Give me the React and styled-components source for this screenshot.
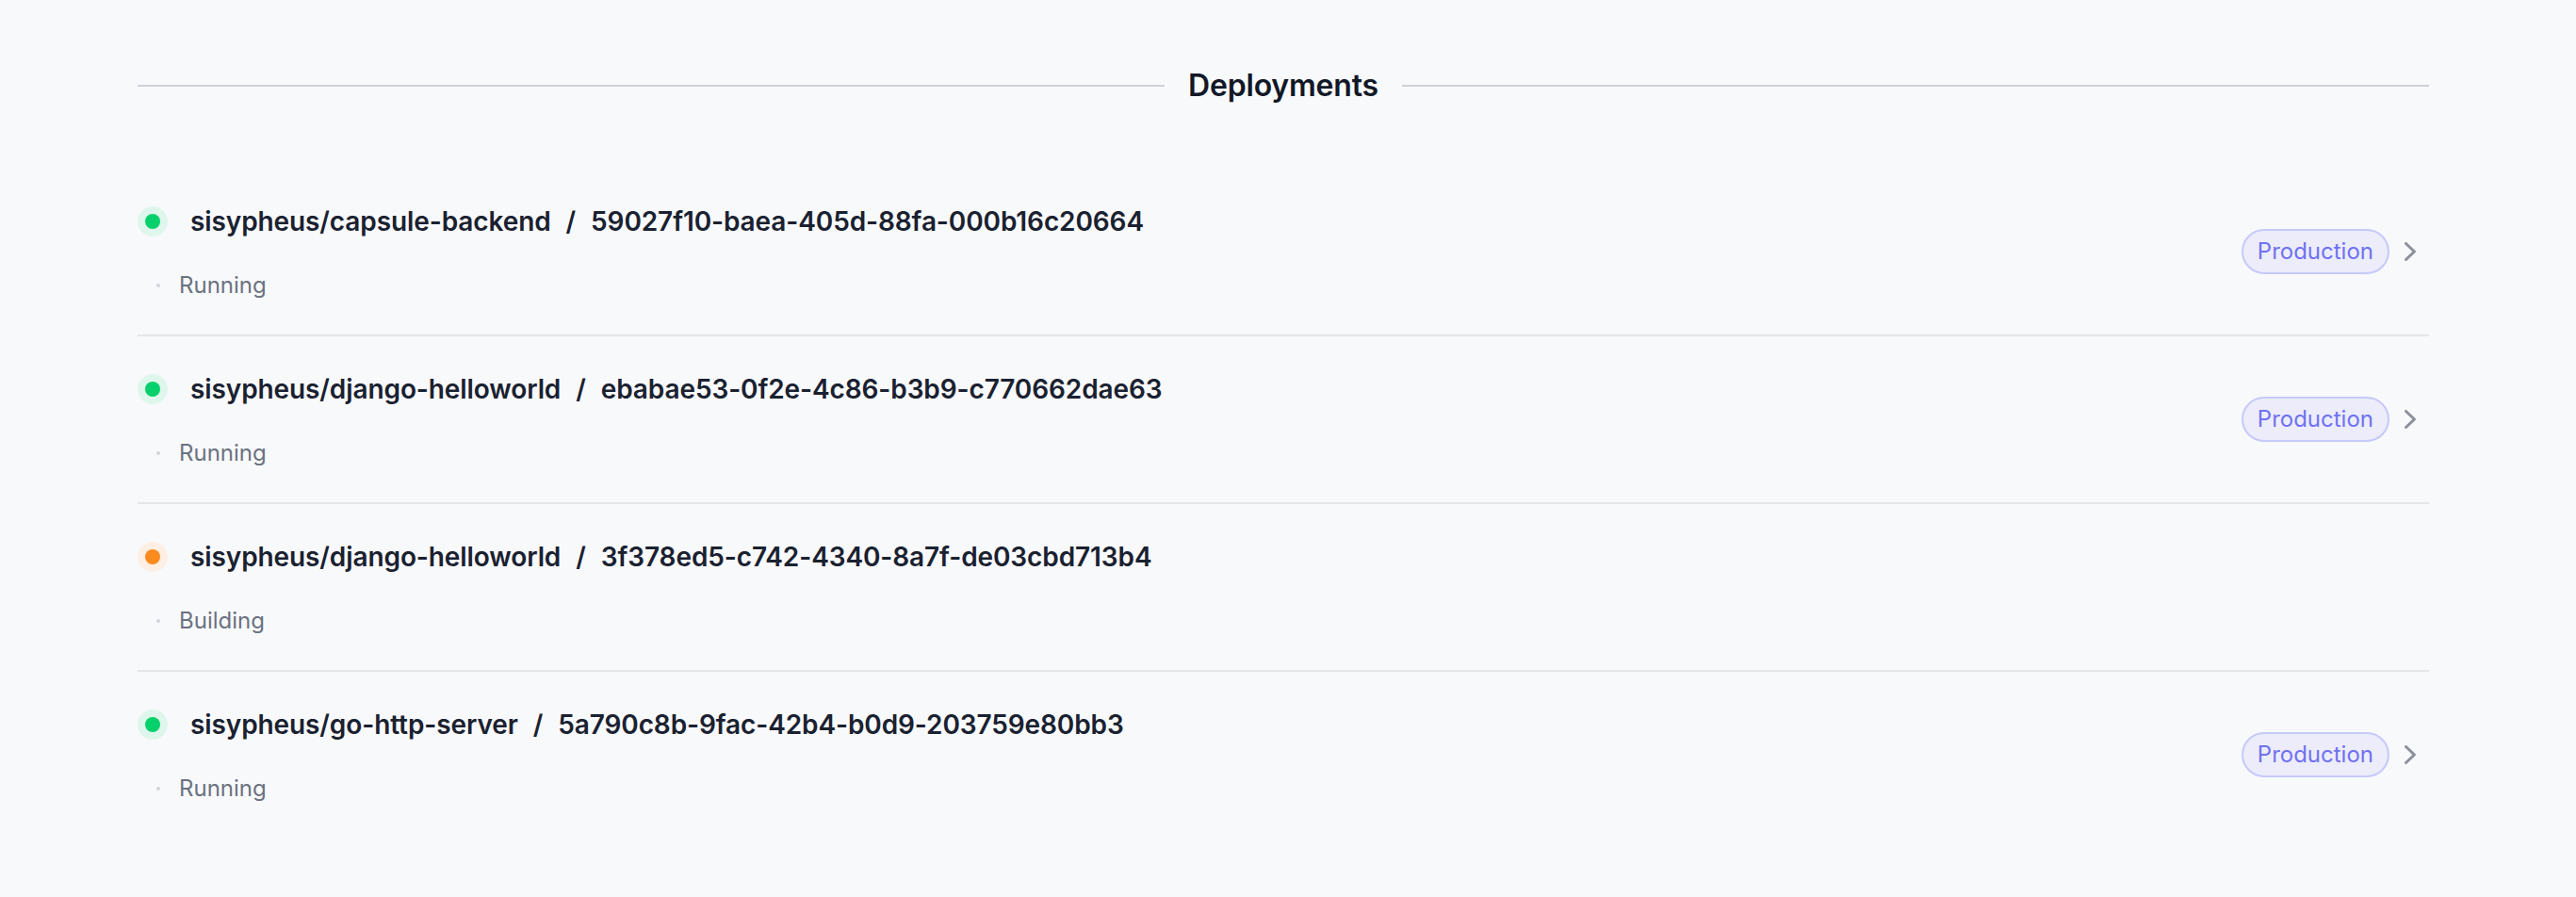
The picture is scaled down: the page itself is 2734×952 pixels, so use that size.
import styled, { createGlobalStyle } from "styled-components";

const GlobalStyle = createGlobalStyle`
  html, body {
    margin: 0;
    padding: 0;
    background: #f8f9fb;
  }
  body {
    font-family: Inter, "Noto Sans", "Liberation Sans", sans-serif;
    -webkit-font-smoothing: antialiased;
  }
`;

const deployments = [
  { repo: "sisypheus/capsule-backend", id: "59027f10-baea-405d-88fa-000b16c20664", status: "Running", env: "Production" },
  { repo: "sisypheus/django-helloworld", id: "ebabae53-0f2e-4c86-b3b9-c770662dae63", status: "Running", env: "Production" },
  { repo: "sisypheus/django-helloworld", id: "3f378ed5-c742-4340-8a7f-de03cbd713b4", status: "Building", env: null },
  { repo: "sisypheus/go-http-server", id: "5a790c8b-9fac-42b4-b0d9-203759e80bb3", status: "Running", env: "Production" },
];

const statusColors = {
  Running: { dot: "#04d16b", halo: "#dff6ec" },
  Building: { dot: "#fb8a1f", halo: "#fdefe3" },
};

// Styled Components

const Page = styled.div`
  width: 2432px;
  margin-left: 146px;
  padding-top: 67px;
  padding-bottom: 63px;
`;

const Heading = styled.div`
  display: flex;
  align-items: center;
  height: 48px;
`;

const HeadingLine = styled.div`
  flex: 1;
  height: 2px;
  background: #cdd1d7;
`;

const HeadingText = styled.h2`
  margin: 0;
  padding: 0 25px;
  font-size: 32px;
  line-height: 48px;
  font-weight: 600;
  letter-spacing: -0.2px;
  color: #111827;
`;

const List = styled.ul`
  list-style: none;
  margin: 64px 0 0;
  padding: 0;
`;

const Row = styled.li`
  display: flex;
  align-items: center;
  justify-content: space-between;
  padding: 32px 0;
  border-top: ${(props) => (props.first ? "none" : "2px solid #e4e6ea")};
`;

const Info = styled.div`
  display: flex;
  flex-direction: column;
  min-width: 0;
`;

const TitleLine = styled.div`
  display: flex;
  align-items: center;
  gap: 24px;
  height: 48px;
`;

const StatusDot = styled.div`
  flex: none;
  width: 32px;
  height: 32px;
  border-radius: 50%;
  background: ${(props) => props.halo};
  display: flex;
  align-items: center;
  justify-content: center;

  &::after {
    content: "";
    width: 16px;
    height: 16px;
    border-radius: 50%;
    background: ${(props) => props.dot};
  }
`;

const Title = styled.h3`
  margin: 0;
  display: flex;
  gap: 16px;
  font-size: 28px;
  line-height: 48px;
  font-weight: 600;
  letter-spacing: -0.1px;
  color: #1a2130;
  white-space: nowrap;
`;

const Meta = styled.div`
  margin-top: 24px;
  display: flex;
  align-items: center;
  gap: 20px;
  height: 40px;
  font-size: 24px;
  line-height: 40px;
  color: #6b7280;
`;

const Spacer = styled.span`
  width: 0;
`;

const MetaDot = styled.span`
  width: 4px;
  height: 4px;
  border-radius: 50%;
  background: #d1d5db;
`;

const Actions = styled.div`
  display: flex;
  align-items: center;
  gap: 2px;
`;

const Badge = styled.span`
  display: inline-flex;
  align-items: center;
  height: 44px;
  padding: 0 15px;
  border: 2px solid #c7c9f9;
  border-radius: 999px;
  background: #ececfb;
  color: #6f72f1;
  font-size: 24px;
  line-height: 32px;
  font-weight: 400;
`;

const Chevron = () => (
  <svg width="40" height="40" viewBox="0 0 20 20" fill="#8b919b">
    <path
      fillRule="evenodd"
      d="M7.21 14.77a.75.75 0 01.02-1.06L11.168 10 7.23 6.29a.75.75 0 111.04-1.08l4.5 4.25a.75.75 0 010 1.08l-4.5 4.25a.75.75 0 01-1.06-.02z"
    />
  </svg>
);

export default function App() {
  return (
    <>
      <GlobalStyle />
      <Page>
        <Heading>
          <HeadingLine />
          <HeadingText>Deployments</HeadingText>
          <HeadingLine />
        </Heading>
        <List>
          {deployments.map((d, i) => {
            const c = statusColors[d.status];
            return (
              <Row key={d.id} first={i === 0}>
                <Info>
                  <TitleLine>
                    <StatusDot dot={c.dot} halo={c.halo} />
                    <Title>
                      <span>{d.repo}</span>
                      <span>/</span>
                      <span>{d.id}</span>
                    </Title>
                  </TitleLine>
                  <Meta>
                    <Spacer />
                    <MetaDot />
                    <span>{d.status}</span>
                  </Meta>
                </Info>
                {d.env && (
                  <Actions>
                    <Badge>{d.env}</Badge>
                    <Chevron />
                  </Actions>
                )}
              </Row>
            );
          })}
        </List>
      </Page>
    </>
  );
}
